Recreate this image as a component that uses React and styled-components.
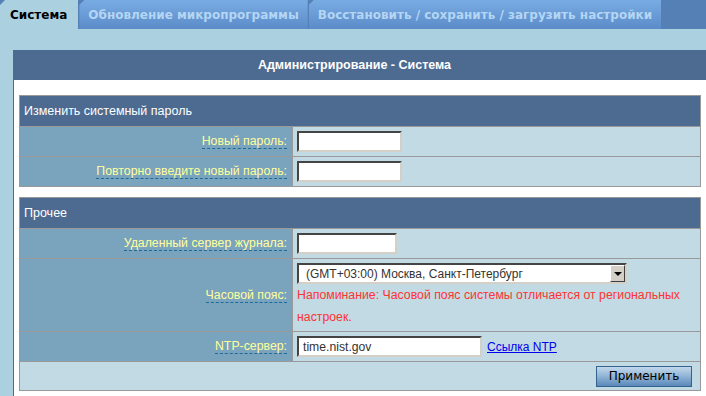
import React from 'react';
import styled, { createGlobalStyle } from 'styled-components';

const GlobalStyle = createGlobalStyle`
  html, body {
    margin: 0;
    padding: 0;
    background: #abd0df;
    overflow: hidden;
  }
  body {
    font-family: "Liberation Sans", Arial, sans-serif;
    font-size: 12px;
  }
`;

const Page = styled.div`
  width: 706px;
  height: 396px;
  overflow: hidden;
`;

const TabBar = styled.div`
  display: flex;
  height: 29px;
  background: #5480b6;
`;

const Tab = styled.div`
  display: flex;
  align-items: center;
  padding: 0 ${p => (p.$active ? '11px 0 10px' : '9px')};
  margin-right: 1px;
  font-family: "DejaVu Sans", Verdana, sans-serif;
  font-weight: bold;
  font-size: 12px;
  white-space: nowrap;
  cursor: pointer;
  clip-path: polygon(5px 0, 100% 0, 100% 100%, 0 100%, 0 5px);
  color: ${p => (p.$active ? '#000' : '#b4d5f3')};
  background: ${p => (p.$active ? '#abd0df' : 'linear-gradient(to bottom, #79abe3, #5b8cc9)')};
`;

const Panel = styled.div`
  margin: 21px 0 0 13px;
  width: 694px;
  box-sizing: border-box;
  border-left: 1px solid #4d6b91;
  border-right: 1px solid #4d6b91;
  background: #fff;
`;

const PanelTitle = styled.div`
  height: 30px;
  display: flex;
  align-items: center;
  justify-content: center;
  padding-right: 11px;
  background: #4d6b91;
  color: #fff;
  font-weight: bold;
  font-size: 12.5px;
`;

const PanelBody = styled.div`
  padding: 15px 5px 10px;
  display: flex;
  flex-direction: column;
  gap: 10px;
`;

const Section = styled.div`
  border: 1px solid #999;
  background: #c1dae3;
`;

const SectionHead = styled.div`
  height: 30px;
  display: flex;
  align-items: center;
  padding-left: 4px;
  background: #4d6b91;
  color: #fff;
  font-size: 12.5px;
`;

const Row = styled.div`
  display: grid;
  grid-template-columns: 273px 1fr;
  border-top: 1px solid #999;
  min-height: 29px;
`;

const LabelCell = styled.div`
  box-sizing: border-box;
  display: flex;
  align-items: center;
  justify-content: flex-end;
  padding-right: 5px;
  background: #7aa3bd;
  border-right: 1px solid #999;
`;

const Hint = styled.span`
  color: #ffff9c;
  font-size: 12.3px;
  line-height: 14px;
  border-bottom: 1px dashed #1e6b99;
  cursor: help;
`;

const ValueCell = styled.div`
  display: flex;
  flex-direction: ${p => (p.$stack ? 'column' : 'row')};
  align-items: ${p => (p.$stack ? 'flex-start' : 'center')};
  padding: ${p => (p.$stack ? '4px 4px 3px' : '0 4px')};
`;

const TextInput = styled.input`
  box-sizing: border-box;
  width: ${p => p.$w}px;
  height: 21px;
  padding: 0 4px;
  margin: 0;
  background: #fff;
  border-style: solid;
  border-width: 2px;
  border-color: #444 #d4d0c8 #d4d0c8 #444;
  font-family: "Liberation Sans", Arial, sans-serif;
  font-size: 12.2px;
  color: #333;
  outline: none;
`;

const SelectBox = styled.div`
  box-sizing: border-box;
  width: 330px;
  height: 21px;
  display: flex;
  align-items: center;
  justify-content: space-between;
  background: #fff;
  border-style: solid;
  border-width: 2px;
  border-color: #444 #d4d0c8 #d4d0c8 #444;
  padding-left: 7px;
  color: #333;
  font-size: 12px;
`;

const SelectArrow = styled.span`
  box-sizing: border-box;
  width: 15px;
  height: 17px;
  background: #d4d0c8;
  border-style: solid;
  border-width: 1px;
  border-color: #fff #404040 #404040 #fff;
  display: flex;
  align-items: center;
  justify-content: center;

  &::after {
    content: '';
    border-left: 4px solid transparent;
    border-right: 4px solid transparent;
    border-top: 4px solid #000;
  }
`;

const Warning = styled.div`
  color: #f33;
  font-size: 12.3px;
  line-height: 22px;
`;

const NtpLink = styled.a`
  margin-left: 5px;
  color: #00e;
  font-size: 12px;
  text-decoration: underline;
`;

const ActionRow = styled.div`
  display: flex;
  justify-content: flex-end;
  align-items: center;
  height: 28px;
  padding-right: 8px;
  border-top: 1px solid #999;
`;

const ApplyButton = styled.button`
  width: 96px;
  height: 21px;
  padding: 0;
  border: 1px solid #34628f;
  background: linear-gradient(to bottom, #c2d8ec 0%, #94b6d7 45%, #5b89bb 100%);
  font-family: "DejaVu Sans", Verdana, sans-serif;
  font-size: 12px;
  color: #000;
  cursor: pointer;
`;

const Field = ({ label, children, stack }) => (
  <Row>
    <LabelCell>
      <Hint>{label}</Hint>
    </LabelCell>
    <ValueCell $stack={stack}>{children}</ValueCell>
  </Row>
);

export default function App() {
  return (
    <Page>
      <GlobalStyle />
      <TabBar>
        <Tab $active>Система</Tab>
        <Tab>Обновление микропрограммы</Tab>
        <Tab>Восстановить / сохранить / загрузить настройки</Tab>
      </TabBar>

      <Panel>
        <PanelTitle>Администрирование - Система</PanelTitle>
        <PanelBody>
          <Section>
            <SectionHead>Изменить системный пароль</SectionHead>
            <Field label="Новый пароль:">
              <TextInput type="password" $w={105} />
            </Field>
            <Field label="Повторно введите новый пароль:">
              <TextInput type="password" $w={105} />
            </Field>
          </Section>

          <Section>
            <SectionHead>Прочее</SectionHead>
            <Field label="Удаленный сервер журнала:">
              <TextInput type="text" $w={100} />
            </Field>
            <Field label="Часовой пояс:" stack>
              <SelectBox>
                <span>(GMT+03:00) Москва, Санкт-Петербург</span>
                <SelectArrow />
              </SelectBox>
              <Warning>
                Напоминание: Часовой пояс системы отличается от региональных настроек.
              </Warning>
            </Field>
            <Field label="NTP-сервер:">
              <TextInput type="text" $w={185} defaultValue="time.nist.gov" />
              <NtpLink href="#">Ссылка NTP</NtpLink>
            </Field>
            <ActionRow>
              <ApplyButton>Применить</ApplyButton>
            </ActionRow>
          </Section>
        </PanelBody>
      </Panel>
    </Page>
  );
}
